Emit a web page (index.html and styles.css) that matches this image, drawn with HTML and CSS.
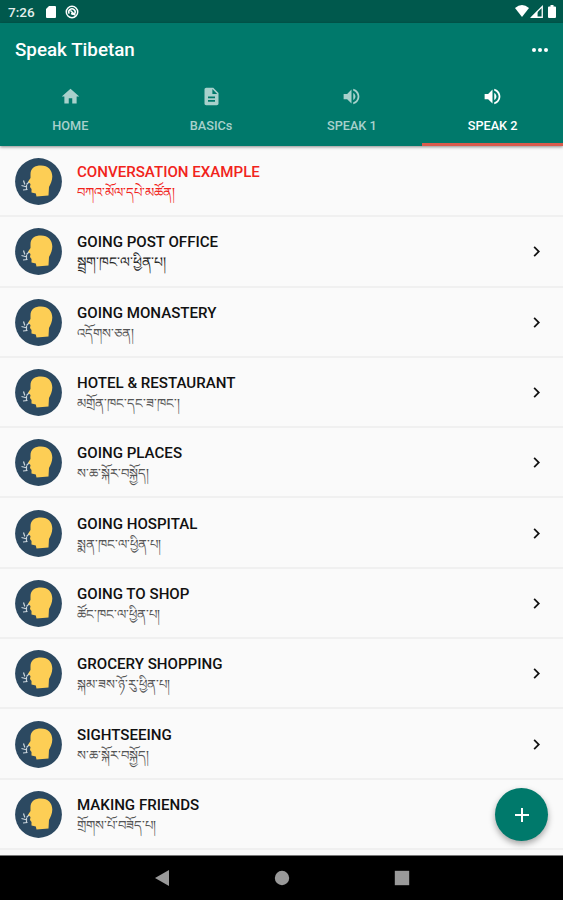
FILE: index.html
```html
<!DOCTYPE html>
<html lang="en">
  <head>
    <meta charset="utf-8" />
    <title>Speak Tibetan</title>
    <link rel="stylesheet" href="styles.css">
  </head>
  <body>
    <svg class="symbols">
      <symbol id="avatar" viewBox="0 0 47 47">
        <circle cx="23.5" cy="23.5" r="23.4" fill="#2c4961" />
        <path fill="#fdce55" d="M15.500 16C15.500 10 20 7.500 26 7.500C33 7.500 37.300 12 37.300 18.500C37.300 23 35.500 26 34 29L33.500 37.500L21.500 38.500L20.800 35.500L16.500 34.500L16.500 31L15 29L15.500 26L13 23.800L15.500 20Z" />
        <path fill="none" stroke="#cbd5dc" stroke-width="1.200" d="M8.500 22.500L9.800 26.500M11.500 26.500L14 24M6.500 27.500L12 29M8 32L12.500 31.500M11.500 27V31.500" />
      </symbol>
      <symbol id="chevron" viewBox="0 0 24 24">
        <path d="M10 6L8.590 7.410L13.170 12L8.590 16.590L10 18L16 12Z" />
      </symbol>
      <symbol id="volume" viewBox="0 0 24 24">
        <path d="M3 9v6h4l5 5V4L7 9H3zm13.500 3c0-1.770-1.020-3.290-2.500-4.030v8.050c1.480-.73 2.500-2.250 2.500-4.020zM14 3.230v2.060c2.890.86 5 3.540 5 6.710s-2.110 5.850-5 6.710v2.060c4.010-.91 7-4.490 7-8.770s-2.990-7.860-7-8.770z" />
      </symbol>
    </svg>
    <div class="app">
      <div class="status-bar">
        <span class="time">7:26</span>
        <svg class="status-icon sd" viewBox="0 0 10 12"><path d="M3 0h6q1 0 1 1v10q0 1-1 1H1q-1 0-1-1V3z" /></svg>
        <svg class="status-icon round" viewBox="0 0 14 14"><g fill="none" stroke="#fff" stroke-width="1.500"><circle cx="7" cy="7" r="5.700" /><path d="M4.200 8.700A3.200 3.200 0 1 1 9.700 8.700M5.500 5.500L10.500 10.500M6 8.500L8.500 9.500" /></g></svg>
        <div class="status-right">
          <svg class="wifi" viewBox="0 0 14 12"><path d="M0 3Q7-3 14 3L7 12z" /></svg>
          <svg class="signal" viewBox="0 0 12 12"><path d="M1.500 11.300L11.300 1.500V11.300Z" fill="none" stroke="#fff" stroke-width="1.200" /><path d="M1 11.500L7 5.500V11.500z" /></svg>
          <svg class="battery" viewBox="0 0 8 13"><path d="M2.500 0h3v1.500H7q1 0 1 1V12q0 1-1 1H1q-1 0-1-1V2.500q0-1 1-1h1.500z" /></svg>
        </div>
      </div>
      <div class="header">
        <div class="app-bar">
          <div class="app-title">Speak Tibetan</div>
          <div class="more"><i></i><i></i><i></i></div>
        </div>
        <div class="tabs">
          <div class="tab">
            <svg class="tab-icon" viewBox="0 0 24 24"><path d="M10 20v-6h4v6h5v-8h3L12 3 2 12h3v8z" /></svg>
            <span>HOME</span>
          </div>
          <div class="tab">
            <svg class="tab-icon" viewBox="0 0 24 24"><path d="M14 2H6c-1.100 0-2 .9-2 2v16c0 1.100.9 2 2 2h12c1.100 0 2-.9 2-2V8l-6-6zm2 16H8v-2h8v2zm0-4H8v-2h8v2zm-3-5V3.500L18.500 9H13z" /></svg>
            <span>BASICs</span>
          </div>
          <div class="tab">
            <svg class="tab-icon"><use href="#volume" /></svg>
            <span>SPEAK 1</span>
          </div>
          <div class="tab active">
            <svg class="tab-icon"><use href="#volume" /></svg>
            <span>SPEAK 2</span>
          </div>
        </div>
      </div>
      <div class="list">
        <div class="item heading">
          <svg class="avatar"><use href="#avatar" /></svg>
          <div class="item-text">
            <div class="item-title">CONVERSATION EXAMPLE</div>
            <div class="item-sub" lang="bo">བཀའ་མོལ་དཔེ་མཚོན།</div>
          </div>
        </div>
        <div class="item">
          <svg class="avatar"><use href="#avatar" /></svg>
          <div class="item-text">
            <div class="item-title">GOING POST OFFICE</div>
            <div class="item-sub large" lang="bo">སྦྲག་ཁང་ལ་ཕྱིན་པ།</div>
          </div>
          <svg class="chevron"><use href="#chevron" /></svg>
        </div>
        <div class="item">
          <svg class="avatar"><use href="#avatar" /></svg>
          <div class="item-text">
            <div class="item-title">GOING MONASTERY</div>
            <div class="item-sub" lang="bo">འདོགས་ཅན།</div>
          </div>
          <svg class="chevron"><use href="#chevron" /></svg>
        </div>
        <div class="item">
          <svg class="avatar"><use href="#avatar" /></svg>
          <div class="item-text">
            <div class="item-title">HOTEL &amp; RESTAURANT</div>
            <div class="item-sub" lang="bo">མགྲོན་ཁང་དང་ཟ་ཁང་།</div>
          </div>
          <svg class="chevron"><use href="#chevron" /></svg>
        </div>
        <div class="item">
          <svg class="avatar"><use href="#avatar" /></svg>
          <div class="item-text">
            <div class="item-title">GOING PLACES</div>
            <div class="item-sub" lang="bo">ས་ཆ་སྐོར་བསྐྱོད།</div>
          </div>
          <svg class="chevron"><use href="#chevron" /></svg>
        </div>
        <div class="item">
          <svg class="avatar"><use href="#avatar" /></svg>
          <div class="item-text">
            <div class="item-title">GOING HOSPITAL</div>
            <div class="item-sub" lang="bo">སྨན་ཁང་ལ་ཕྱིན་པ།</div>
          </div>
          <svg class="chevron"><use href="#chevron" /></svg>
        </div>
        <div class="item">
          <svg class="avatar"><use href="#avatar" /></svg>
          <div class="item-text">
            <div class="item-title">GOING TO SHOP</div>
            <div class="item-sub" lang="bo">ཚོང་ཁང་ལ་ཕྱིན་པ།</div>
          </div>
          <svg class="chevron"><use href="#chevron" /></svg>
        </div>
        <div class="item">
          <svg class="avatar"><use href="#avatar" /></svg>
          <div class="item-text">
            <div class="item-title">GROCERY SHOPPING</div>
            <div class="item-sub" lang="bo">སྐམ་ཟས་ཉོ་རུ་ཕྱིན་པ།</div>
          </div>
          <svg class="chevron"><use href="#chevron" /></svg>
        </div>
        <div class="item">
          <svg class="avatar"><use href="#avatar" /></svg>
          <div class="item-text">
            <div class="item-title">SIGHTSEEING</div>
            <div class="item-sub" lang="bo">ས་ཆ་སྐོར་བསྐྱོད།</div>
          </div>
          <svg class="chevron"><use href="#chevron" /></svg>
        </div>
        <div class="item">
          <svg class="avatar"><use href="#avatar" /></svg>
          <div class="item-text">
            <div class="item-title">MAKING FRIENDS</div>
            <div class="item-sub" lang="bo">གྲོགས་པོ་བཟོད་པ།</div>
          </div>
        </div>
      </div>
      <div class="nav-bar">
        <svg class="nav-icon" viewBox="0 0 16 16"><path d="M1 8L15 0V16z" /></svg>
        <svg class="nav-icon" viewBox="0 0 16 16"><circle cx="8" cy="8" r="7.200" /></svg>
        <svg class="nav-icon" viewBox="0 0 16 16"><path d="M.8.8h14.400v14.400H.8z" /></svg>
      </div>
      <div class="fab">
        <svg class="fab-icon" viewBox="0 0 14 14"><path d="M7 0V14M0 7H14" /></svg>
      </div>
    </div>
  </body>
</html>
```
FILE: styles.css
```css
* {
  box-sizing: border-box;
}
body {
  margin: 0;
  font-family: Roboto, "Noto Sans", sans-serif;
  background-color: #fafafa;
}
.symbols {
  display: none;
}
.app {
  position: relative;
  display: flex;
  flex-direction: column;
  width: 563px;
  height: 900px;
  overflow: hidden;
}
.status-bar {
  display: flex;
  align-items: center;
  height: 23px;
  padding: 1px 7px 0 8px;
  background-color: #00594d;
  color: #fff;
  fill: #fff;
}
.time {
  width: 38px;
  font-size: 13.5px;
  font-weight: 500;
  color: #e3eeec;
}
.sd {
  width: 10px;
  height: 12px;
}
.round {
  width: 14px;
  height: 14px;
  margin-left: 9px;
}
.status-right {
  display: flex;
  align-items: center;
  margin-left: auto;
  margin-top: -2px;
}
.wifi {
  width: 14px;
  height: 12px;
  margin-right: 1px;
}
.signal {
  width: 13px;
  height: 13px;
  margin-right: 5px;
}
.battery {
  width: 8px;
  height: 13px;
}
.header {
  position: relative;
  background-color: #00796b;
  box-shadow: 0 1px 3px rgba(0, 0, 0, 0.45);
}
.app-bar {
  display: flex;
  align-items: center;
  justify-content: space-between;
  height: 53px;
  padding: 0 15px;
}
.app-title {
  font-size: 18.8px;
  font-weight: 500;
  color: #fff;
}
.more {
  display: flex;
  gap: 2px;
}
.more i {
  width: 4px;
  height: 4px;
  border-radius: 50%;
  background-color: #fff;
}
.tabs {
  display: flex;
  height: 70px;
}
.tab {
  display: flex;
  flex: 1;
  flex-direction: column;
  align-items: center;
  padding-top: 10px;
  color: #a8d1cc;
  fill: #a8d1cc;
  font-size: 12.7px;
  font-weight: 500;
  line-height: 16px;
}
.tab-icon {
  width: 21px;
  height: 21px;
  margin-bottom: 11px;
}
.active {
  border-bottom: 3px solid #d95b4d;
  color: #fff;
  fill: #fff;
}
.list {
  flex: 1;
  padding-top: 1px;
  background-color: #fafafa;
}
.item {
  display: flex;
  align-items: center;
  height: 70.3px;
  padding: 1px 16px 0 15px;
  border-bottom: 2px solid #f0f0f0;
}
.avatar {
  flex: none;
  width: 47px;
  height: 47px;
  margin-right: 15px;
}
.item-text {
  flex: 1;
  padding-top: 1px;
}
.item-title {
  font-size: 15.1px;
  font-weight: 500;
  line-height: 20px;
  color: #111;
}
.item-sub {
  height: 20px;
  font-size: 13.2px;
  line-height: 21px;
  white-space: nowrap;
  color: #555;
}
.large {
  font-size: 14px;
  color: #222;
}
.heading .item-title,
.heading .item-sub {
  color: #f1231b;
}
.chevron {
  width: 21px;
  height: 21px;
  fill: #111;
}
.nav-bar {
  display: flex;
  align-items: center;
  justify-content: center;
  gap: 104px;
  height: 45px;
  border-top: 1px solid #777;
  background-color: #000;
}
.nav-icon {
  width: 16px;
  height: 16px;
  fill: #999;
}
.fab {
  position: absolute;
  right: 15px;
  bottom: 59px;
  display: flex;
  align-items: center;
  justify-content: center;
  width: 53px;
  height: 53px;
  border-radius: 50%;
  background-color: #00796b;
  box-shadow: 0 3px 6px rgba(0, 0, 0, 0.35);
}
.fab-icon {
  width: 14px;
  height: 14px;
  stroke: #fff;
  stroke-width: 2;
}
```
